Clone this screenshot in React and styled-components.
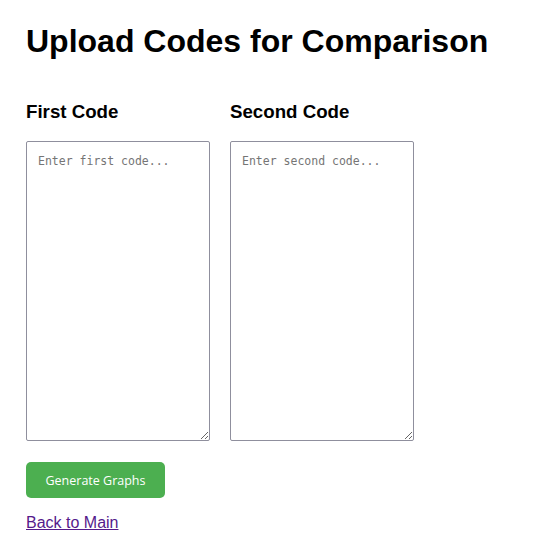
import React from "react"
import styled, { createGlobalStyle } from "styled-components"

const GlobalStyle = createGlobalStyle`
  body {
    margin: 0;
    font-family: "Liberation Sans", Arial, sans-serif;
    background: #ffffff;
    color: #000000;
  }
`

const Page = styled.div`
  padding: 0 26px;
`

const Title = styled.h1`
  font-size: 32px;
  margin: 23px 0 0;
  line-height: 37px;
`

const Editors = styled.div`
  display: flex;
  gap: 20px;
  margin-top: 41px;
`

const Column = styled.div`
  display: flex;
  flex-direction: column;
`

const Label = styled.h3`
  font-size: 18.7px;
  margin: 0 0 19px;
  line-height: 21px;
`

const CodeArea = styled.textarea`
  width: 184px;
  height: 300px;
  box-sizing: border-box;
  margin: 0;
  padding: 11px;
  border: 1px solid #8f8f9d;
  border-radius: 2px;
  font-family: "DejaVu Sans Mono", monospace;
  font-size: 11.5px;
  line-height: 16px;
  resize: both;

  &::placeholder {
    color: #757575;
  }
`

const GenerateButton = styled.button`
  display: block;
  margin-top: 21px;
  width: 139px;
  height: 36px;
  background: #4caf50;
  color: #ffffff;
  border: none;
  border-radius: 5px;
  font-family: "Open Sans", sans-serif;
  font-size: 12.5px;
  cursor: pointer;
`

const BackLink = styled.a`
  display: inline-block;
  margin-top: 16px;
  font-size: 16px;
  color: #551a8b;
`

export default function App() {
  return (
    <>
      <GlobalStyle />
      <Page>
        <Title>Upload Codes for Comparison</Title>
        <Editors>
          <Column>
            <Label>First Code</Label>
            <CodeArea placeholder="Enter first code..." />
          </Column>
          <Column>
            <Label>Second Code</Label>
            <CodeArea placeholder="Enter second code..." />
          </Column>
        </Editors>
        <GenerateButton>Generate Graphs</GenerateButton>
        <BackLink href="#">Back to Main</BackLink>
      </Page>
    </>
  )
}
